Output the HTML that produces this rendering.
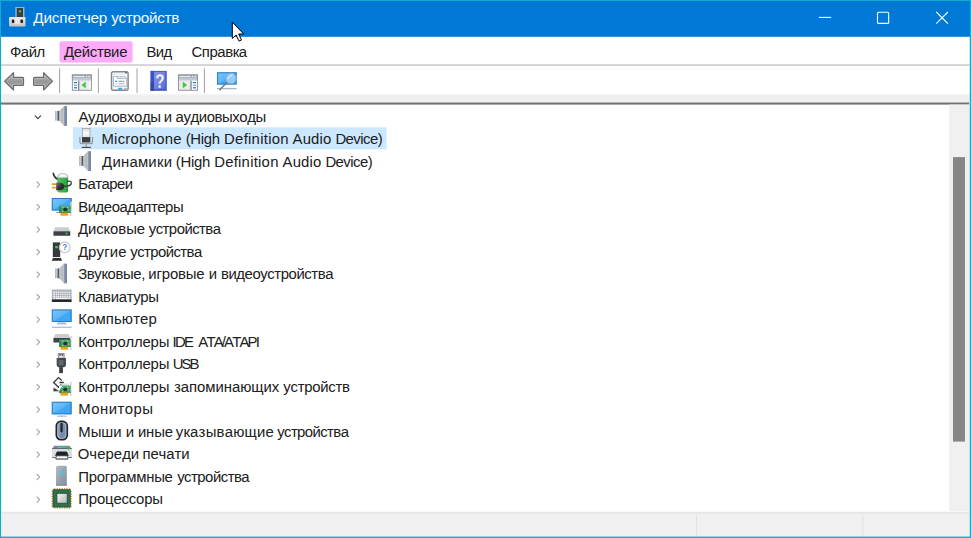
<!DOCTYPE html>
<html lang="ru"><head><meta charset="utf-8"><title>Диспетчер устройств</title>
<style>html,body{margin:0;padding:0;background:#fff;overflow:hidden}body{width:971px;height:538px;position:relative}svg{position:absolute;left:0;top:0;display:block}text{font-family:"Liberation Sans", sans-serif;white-space:pre;font-kerning:none}</style></head><body>
<svg width="971" height="538" viewBox="0 0 971 538">
<defs>
<linearGradient id="gArrow" x1="0" y1="0" x2="0" y2="1"><stop offset="0" stop-color="#bcbcbc"/><stop offset="0.55" stop-color="#969696"/><stop offset="1" stop-color="#acacac"/></linearGradient>
<linearGradient id="gCone" x1="0" y1="0" x2="1" y2="0"><stop offset="0" stop-color="#9a9fa4"/><stop offset="0.3" stop-color="#c6c8ca"/><stop offset="1" stop-color="#a9acb0"/></linearGradient>
<linearGradient id="gRim" x1="0" y1="0" x2="1" y2="0"><stop offset="0" stop-color="#b9c0c8"/><stop offset="0.35" stop-color="#8695a6"/><stop offset="1" stop-color="#66788c"/></linearGradient>
<linearGradient id="gMag" x1="0" y1="0" x2="1" y2="0"><stop offset="0" stop-color="#93a3b4"/><stop offset="0.4" stop-color="#ccd3da"/><stop offset="0.7" stop-color="#6c747c"/><stop offset="1" stop-color="#3f454b"/></linearGradient>
<linearGradient id="gScreen" x1="0" y1="0" x2="1" y2="1"><stop offset="0" stop-color="#7cc7fc"/><stop offset="0.5" stop-color="#5ab5f8"/><stop offset="0.52" stop-color="#44a8f3"/><stop offset="1" stop-color="#3fa4f2"/></linearGradient>
<linearGradient id="gTower" x1="0" y1="0" x2="1" y2="1"><stop offset="0" stop-color="#b4bcc8"/><stop offset="0.5" stop-color="#98a2b0"/><stop offset="1" stop-color="#848e9c"/></linearGradient>
<linearGradient id="gMouse" x1="0" y1="0" x2="1" y2="0"><stop offset="0" stop-color="#9fb2cb"/><stop offset="0.5" stop-color="#6f87a8"/><stop offset="1" stop-color="#8299b8"/></linearGradient>
<linearGradient id="gChip" x1="0" y1="0" x2="1" y2="1"><stop offset="0" stop-color="#f2f2f2"/><stop offset="1" stop-color="#b5b8ba"/></linearGradient>
<linearGradient id="gBase" x1="0" y1="0" x2="0" y2="1"><stop offset="0" stop-color="#ececec"/><stop offset="0.5" stop-color="#d6d6d6"/><stop offset="1" stop-color="#c6c2be"/></linearGradient>
<linearGradient id="gPlug" x1="0" y1="0" x2="1" y2="1"><stop offset="0" stop-color="#7a7a7a"/><stop offset="0.45" stop-color="#3a3a3a"/><stop offset="1" stop-color="#1c1c1c"/></linearGradient>
<linearGradient id="gBatt" x1="0" y1="0" x2="1" y2="0"><stop offset="0" stop-color="#4cc455"/><stop offset="0.55" stop-color="#36b648"/><stop offset="1" stop-color="#23963a"/></linearGradient>
<linearGradient id="gHelp" x1="0" y1="0" x2="1" y2="1"><stop offset="0" stop-color="#8890e3"/><stop offset="0.55" stop-color="#7482dd"/><stop offset="1" stop-color="#4a6cd6"/></linearGradient>
<linearGradient id="gUsb" x1="0" y1="0" x2="1" y2="0"><stop offset="0" stop-color="#55595d"/><stop offset="0.5" stop-color="#3a3d40"/><stop offset="1" stop-color="#4c5054"/></linearGradient>
<linearGradient id="gMic" x1="0" y1="0" x2="0" y2="1"><stop offset="0" stop-color="#d8d8d8"/><stop offset="0.5" stop-color="#fafafa"/><stop offset="1" stop-color="#e4e4e4"/></linearGradient>
<g id="speaker">
  <rect x="0" y="4.8" width="3.9" height="9.8" fill="url(#gMag)"/>
  <path d="M3.9 4.8 L8.4 0.5 L8.4 19.2 L3.9 14.6 Z" fill="url(#gCone)"/>
  <rect x="8.3" y="0" width="3.4" height="19.8" fill="url(#gRim)"/>
</g>
<g id="chev"><path d="M0.5 0.5 L3.4 3.5 L0.5 6.5" fill="none" stroke="#a3a3a3" stroke-width="1.1"/></g>
<g id="pcb">
  <rect x="10.9" y="-4" width="1.4" height="14" fill="#c9ced3"/>
  <rect x="11.8" y="-4" width="0.5" height="14" fill="#eceef0"/>
  <rect x="0" y="0" width="11.4" height="7" fill="#3f9f5e"/>
  <rect x="0" y="0" width="1.5" height="7" fill="#2d8149"/>
  <rect x="0" y="0" width="11.4" height="0.9" fill="#5db578"/>
  <rect x="0" y="6.2" width="11.4" height="0.8" fill="#2f7d49"/>
  <rect x="4.1" y="2.2" width="3.9" height="3" rx="1.3" fill="#2a2f2c"/>
  <rect x="3.1" y="1.3" width="0.9" height="0.9" fill="#dfe9e2"/><rect x="8" y="1.3" width="0.9" height="0.9" fill="#dfe9e2"/>
  <rect x="3.1" y="5.2" width="0.9" height="0.9" fill="#dfe9e2"/><rect x="9" y="3.8" width="0.9" height="0.9" fill="#dfe9e2"/>
  <rect x="1.2" y="7" width="7.7" height="2.9" fill="#eea316"/>
</g>
<g id="monitor">
  <rect x="0" y="0" width="19.8" height="12.5" fill="url(#gScreen)"/>
  <rect x="0.5" y="0.5" width="18.8" height="11.5" fill="none" stroke="#2c7fc6" stroke-width="1.05"/>
</g>
<g id="hdd">
  <path d="M2 0 L14.9 0 L16.9 3.9 L0 3.9 Z" fill="#c9cdd1"/>
  <rect x="0" y="3.9" width="16.9" height="4.6" rx="0.6" fill="#3e4246"/>
  <rect x="12.2" y="5.4" width="1.8" height="1.5" fill="#37d64b"/>
</g>
</defs>
<rect x="0" y="0" width="971" height="538" fill="#ffffff"/>
<rect x="0" y="0" width="971" height="36.8" fill="#0078d6"/>
<g><rect x="15.4" y="7" width="9" height="10.2" fill="#b9cbdc" opacity="0.85"/><rect x="16.7" y="7.9" width="6.4" height="9.3" fill="#3b3e40"/><rect x="18.8" y="10.3" width="2.2" height="2" fill="#34d53c"/><rect x="9.1" y="17" width="16.4" height="9.6" rx="0.8" fill="url(#gBase)"/><rect x="11.8" y="19.6" width="2.5" height="3.4" rx="0.8" fill="#1e1e1e"/><rect x="20.5" y="19.6" width="2.5" height="3.4" rx="0.8" fill="#1e1e1e"/><rect x="15" y="18.6" width="4.6" height="5.4" fill="#f4f4f4" opacity="0.6"/></g>
<g stroke="#ffffff" stroke-width="1.1" fill="none"><path d="M819 17.4 H831.2"/><rect x="877.5" y="12.2" width="11.2" height="11.2" rx="1"/><path d="M936.3 12 L947.9 23.6 M947.9 12 L936.3 23.6"/></g>
<rect x="59.5" y="41.3" width="73.1" height="21.2" rx="1.6" fill="#ffa9fb"/>
<rect x="0" y="64.3" width="971" height="1.5" fill="#c9c9c9"/>
<rect x="0" y="94.2" width="971" height="8.4" fill="#f0f0f0"/>
<rect x="0" y="102.5" width="969.5" height="2.1" fill="#737373"/>
<rect x="0" y="102" width="969.5" height="0.6" fill="#b9b9b9"/>
<rect x="59.0" y="68.4" width="1.1" height="24.6" fill="#a9a9a9"/>
<rect x="97.9" y="68.4" width="1.1" height="24.6" fill="#a9a9a9"/>
<rect x="136.5" y="68.4" width="1.1" height="24.6" fill="#a9a9a9"/>
<rect x="203.9" y="68.4" width="1.1" height="24.6" fill="#a9a9a9"/>
<g><path d="M4.7 81.25 L13.5 72.6 L13.5 77.4 L22.6 77.4 Q23.5 77.4 23.5 78.3 L23.5 84.5 Q23.5 85.4 22.6 85.4 L13.5 85.4 L13.5 90 Z" fill="url(#gArrow)" stroke="#6c6c6c" stroke-width="1.2" stroke-linejoin="round"/><path d="M6.4 81.25 L12.4 75.3 L12.4 78.5 L22.3 78.5 L22.3 84.2 L12.4 84.2 L12.4 87.2 Z" fill="none" stroke="#bdbdbd" stroke-width="0.8" stroke-linejoin="round" opacity="0.8"/></g>
<g transform="translate(57.1,0) scale(-1,1)"><path d="M4.7 81.25 L13.5 72.6 L13.5 77.4 L22.6 77.4 Q23.5 77.4 23.5 78.3 L23.5 84.5 Q23.5 85.4 22.6 85.4 L13.5 85.4 L13.5 90 Z" fill="url(#gArrow)" stroke="#6c6c6c" stroke-width="1.2" stroke-linejoin="round"/><path d="M6.4 81.25 L12.4 75.3 L12.4 78.5 L22.3 78.5 L22.3 84.2 L12.4 84.2 L12.4 87.2 Z" fill="none" stroke="#bdbdbd" stroke-width="0.8" stroke-linejoin="round" opacity="0.8"/></g>
<g transform="translate(71.9,74.5)"><rect x="0" y="0" width="19.9" height="16.2" fill="#f4f4f4"/><rect x="0" y="0" width="19.9" height="3.4" fill="#a2aab5"/><rect x="0" y="3.4" width="19.9" height="2.8" fill="#c2c9d3"/><rect x="1.2" y="1.4" width="11.6" height="1" fill="#eef1f5"/><rect x="14.1" y="1.2" width="1.2" height="1.4" fill="#f2f4f7"/><rect x="16.3" y="1.2" width="2.3" height="1.4" fill="#dfe3e9"/><rect x="0.8" y="6.2" width="5.6" height="9.3" fill="#ffffff"/><rect x="7.4" y="6.2" width="10.2" height="9.3" fill="#ececec"/><rect x="17.6" y="6.2" width="1.6" height="9.3" fill="#ffffff"/><rect x="6.2" y="6.2" width="1.2" height="9.4" fill="#737d8c"/><rect x="1.9" y="7.5" width="3.2" height="1.2" fill="#2f6fc4"/><rect x="1.9" y="10.1" width="3.2" height="1.2" fill="#6fa0dc"/><rect x="1.9" y="12.7" width="3.2" height="1.2" fill="#2f6fc4"/><path d="M9.8 10.6 L13.7 7.6 L13.7 13.6 Z" fill="#43c643" stroke="#43c643" stroke-width="0.4" stroke-linejoin="round"/><rect x="0.45" y="0.45" width="19" height="15.3" fill="none" stroke="#8c9198" stroke-width="0.95"/></g>
<g transform="translate(178.0,74.5)"><rect x="0" y="0" width="19.9" height="16.2" fill="#f4f4f4"/><rect x="0" y="0" width="19.9" height="3.4" fill="#a2aab5"/><rect x="0" y="3.4" width="19.9" height="2.8" fill="#c2c9d3"/><rect x="1.2" y="1.4" width="11.6" height="1" fill="#eef1f5"/><rect x="14.1" y="1.2" width="1.2" height="1.4" fill="#f2f4f7"/><rect x="16.3" y="1.2" width="2.3" height="1.4" fill="#dfe3e9"/><rect x="13.6" y="6.2" width="5.6" height="9.3" fill="#ffffff"/><rect x="0.8" y="6.2" width="11.6" height="9.3" fill="#ececec"/><rect x="12.4" y="6.2" width="1.2" height="9.4" fill="#737d8c"/><rect x="14.9" y="7.5" width="3.2" height="1.2" fill="#2f6fc4"/><rect x="14.9" y="10.1" width="3.2" height="1.2" fill="#6fa0dc"/><rect x="14.9" y="12.7" width="3.2" height="1.2" fill="#2f6fc4"/><path d="M8.9 10.5 L5 7.4 L5 13.6 Z" fill="#43c643" stroke="#43c643" stroke-width="0.4" stroke-linejoin="round"/><rect x="0.45" y="0.45" width="19" height="15.3" fill="none" stroke="#8c9198" stroke-width="0.95"/></g>
<g transform="translate(110.8,71)"><rect x="0.7" y="0.7" width="16.6" height="18.5" rx="1.8" fill="#f8f9fb" stroke="#81868f" stroke-width="1.45"/><rect x="1.5" y="2.6" width="15" height="0.7" fill="#d3d7de"/><rect x="14.2" y="0.9" width="1.9" height="1.5" fill="#64708a"/><path d="M2.6 5.3 L6.4 5.3 L6.4 7.2 L16 7.2 L16 15.2 L2.6 15.2 Z" fill="#fbfcfe" stroke="#97a4ba" stroke-width="0.85"/><rect x="6.4" y="5.3" width="7.8" height="1.9" fill="#eef1f6" stroke="#a5b0c3" stroke-width="0.6"/><rect x="10" y="5.3" width="0.6" height="1.9" fill="#a5b0c3"/><rect x="4.3" y="9.7" width="2" height="1.3" fill="#3d9bf0"/><rect x="7.6" y="9.8" width="6.2" height="1.1" fill="#9a9fa8"/><rect x="4.6" y="12.2" width="1.5" height="1.1" fill="#c3c7ce"/><rect x="7.6" y="12.2" width="6.2" height="1.1" fill="#b3b8c0"/><rect x="7.3" y="16.8" width="4" height="1.9" fill="#33a7f2"/><rect x="12.8" y="16.9" width="3.6" height="1.7" fill="#b5b8bd"/></g>
<g transform="translate(150.6,70.9)"><rect x="0" y="0" width="16.2" height="19.7" fill="#4464cf"/><rect x="0" y="0" width="3.2" height="19.7" fill="#3655c6"/><rect x="0" y="11.4" width="3.2" height="8.3" fill="#384a98"/><rect x="3.5" y="1.1" width="11" height="17.3" fill="url(#gHelp)"/><rect x="0" y="18.5" width="16.2" height="1.2" fill="#33459a" opacity="0.7"/><text transform="translate(9.3,16.6) scale(0.72,1)" x="0" y="0" font-size="21" font-weight="bold" text-anchor="middle" fill="#f4f6fb" stroke="#93a0c2" stroke-width="0.3">?</text></g>
<g><rect x="217" y="72.3" width="19.6" height="12.2" fill="url(#gScreen)"/><rect x="217.5" y="72.8" width="18.6" height="11.2" fill="none" stroke="#2c7fc6" stroke-width="1.05"/><rect x="217" y="87.9" width="19.6" height="1.4" fill="#a9b9c9"/><path d="M219.8 89.7 L226.6 82.8" stroke="#707984" stroke-width="1.5" stroke-linecap="round"/><circle cx="231" cy="78.4" r="5.3" fill="#8ecdfd" stroke="#93a5b7" stroke-width="1"/><path d="M227.6 78.6 L232.2 74.4" stroke="#c9eaff" stroke-width="1.3" fill="none" stroke-linecap="round"/></g>
<rect x="72.9" y="127.3" width="313.6" height="22.1" fill="#cce8ff"/>
<rect x="949.2" y="104.6" width="20.6" height="406.5" fill="#f0f0f0"/>
<rect x="953" y="157.1" width="12" height="284.5" fill="#868686"/>
<rect x="0" y="511.1" width="971" height="27" fill="#f0f0f0"/>
<rect x="0" y="511.1" width="971" height="1.2" fill="#f9f9f9"/>
<rect x="0" y="512.4" width="971" height="1" fill="#dedede"/>
<rect x="696" y="515.5" width="1" height="21" fill="#e1e1e1"/>
<rect x="862.3" y="515.5" width="1" height="21" fill="#e1e1e1"/>
<path d="M34.9 115.6 L37.9 118.6 L40.9 115.6" fill="none" stroke="#404040" stroke-width="1.15"/>
<use href="#chev" x="36.2" y="181.10"/>
<use href="#chev" x="36.2" y="203.60"/>
<use href="#chev" x="36.2" y="226.10"/>
<use href="#chev" x="36.2" y="248.60"/>
<use href="#chev" x="36.2" y="271.10"/>
<use href="#chev" x="36.2" y="293.60"/>
<use href="#chev" x="36.2" y="316.10"/>
<use href="#chev" x="36.2" y="338.60"/>
<use href="#chev" x="36.2" y="361.10"/>
<use href="#chev" x="36.2" y="383.60"/>
<use href="#chev" x="36.2" y="406.10"/>
<use href="#chev" x="36.2" y="428.60"/>
<use href="#chev" x="36.2" y="451.10"/>
<use href="#chev" x="36.2" y="473.60"/>
<use href="#chev" x="36.2" y="496.10"/>
<use href="#speaker" x="55.2" y="106.10"/>
<g transform="translate(79.3,128.40)"><rect x="3" y="0" width="7.7" height="9" fill="url(#gMic)" stroke="#9c9c9c" stroke-width="0.7"/><rect x="2.7" y="8.7" width="8.3" height="5.4" fill="#3d3d3d"/><path d="M0.6 8.6 L0.6 13.4 Q0.6 15.4 2.6 15.4 L11.2 15.4 Q13.2 15.4 13.2 13.4 L13.2 8.6" fill="none" stroke="#8f8f8f" stroke-width="1.1"/><rect x="6.4" y="15.4" width="1.1" height="3.4" fill="#8f8f8f"/><rect x="2.4" y="18.4" width="9.2" height="1.2" fill="#4a4a4a"/></g>
<use href="#speaker" x="79.2" y="151.20"/>
<g transform="translate(51.4,173.20)"><path d="M1.9 0.2 Q2.5 3.9 6.2 6.2" fill="none" stroke="#333333" stroke-width="1.6" stroke-linecap="round"/><rect x="6" y="1.4" width="10.7" height="17.9" rx="2.6" fill="url(#gBatt)"/><path d="M6.2 4.6 Q6.2 0.3 11.35 0.3 Q16.5 0.3 16.5 4.6 Z" fill="#eef2f5" stroke="#9ba9b4" stroke-width="0.7"/><path d="M8.6 2.9 Q11.3 1.3 14.2 2.9" fill="none" stroke="#ffffff" stroke-width="1.1"/><path d="M16.2 8.2 Q20.6 7.4 19.8 10.6 Q18.9 13.6 12.4 12.6" fill="none" stroke="#383838" stroke-width="1.25" stroke-linecap="round"/><rect x="0.5" y="10.1" width="4.6" height="1.7" fill="#e2952a"/><rect x="0.5" y="13.5" width="4.6" height="1.7" fill="#e2952a"/><rect x="0.9" y="11.8" width="3.8" height="1.7" fill="#f4f4f4"/><path d="M4.8 9.2 L8.8 9.2 Q12.9 9.7 12.9 13.1 Q12.9 16.6 8.8 17.1 L4.8 17.1 Z" fill="url(#gPlug)"/></g>
<g transform="translate(51.8,198.00)"><use href="#monitor"/><rect x="4.6" y="14.1" width="3" height="0.9" fill="#6f88b3"/><use href="#pcb" x="7.5" y="7.8"/></g>
<use href="#hdd" x="53.4" y="227.30"/>
<g transform="translate(51.4,242.40)"><rect x="1.4" y="0" width="7.4" height="14.7" fill="#36393c"/><path d="M0.4 18.3 L1.6 15.5 L9.4 15.5 L10.7 18.3 Z" fill="#2b2d30"/><rect x="3.8" y="3.5" width="2.5" height="2.4" fill="#3fd447"/><circle cx="13.3" cy="5" r="5.3" fill="#ffffff" stroke="#c2c6ca" stroke-width="1.25"/><text x="13.4" y="7.9" font-size="8.2" font-weight="bold" text-anchor="middle" fill="#3888d8">?</text></g>
<use href="#speaker" x="55.2" y="263.60"/>
<g transform="translate(51.8,289.50)"><rect x="0" y="0" width="19.8" height="10.2" fill="#adb4bf"/><rect x="0" y="9.9" width="19.8" height="2.6" fill="#26282b"/><rect x="1.5" y="2.2" width="16.8" height="1.5" fill="#f4f5f7"/><rect x="1.5" y="4.3" width="16.8" height="1.5" fill="#f4f5f7"/><rect x="1.5" y="6.5" width="16.8" height="1.5" fill="#f4f5f7"/><rect x="3.4" y="2.1" width="0.55" height="6" fill="#8f97a3"/><rect x="5.3" y="2.1" width="0.55" height="6" fill="#8f97a3"/><rect x="7.2" y="2.1" width="0.55" height="6" fill="#8f97a3"/><rect x="9.1" y="2.1" width="0.55" height="6" fill="#8f97a3"/><rect x="11.0" y="2.1" width="0.55" height="6" fill="#8f97a3"/><rect x="12.9" y="2.1" width="0.55" height="6" fill="#8f97a3"/><rect x="14.8" y="2.1" width="0.55" height="6" fill="#8f97a3"/><rect x="16.7" y="2.1" width="0.55" height="6" fill="#8f97a3"/><rect x="1.5" y="8.5" width="2" height="1" fill="#f4f5f7"/><rect x="16.3" y="8.5" width="2" height="1" fill="#f4f5f7"/><rect x="4.2" y="8.5" width="11.4" height="1" fill="#fbfbfc"/></g>
<g transform="translate(51.8,309.50)"><use href="#monitor"/><path d="M6.6 12.5 L13.2 12.5 L14.8 14.6 L5 14.6 Z" fill="#c3d0de"/><rect x="5" y="14.1" width="9.8" height="0.8" fill="#94abc4"/><rect x="0" y="17.2" width="19.8" height="1" fill="#8fa8c2"/></g>
<g transform="translate(51.8,334.10)"><use href="#hdd" x="1.6" y="0"/><use href="#pcb" x="7.5" y="5.7"/></g>
<g transform="translate(56.6,353.60)"><rect x="1.7" y="0" width="5.8" height="4.6" fill="#e6e8ea" stroke="#74787c" stroke-width="0.8"/><rect x="2.1" y="0.4" width="5" height="1.2" fill="#7c8084"/><rect x="2.7" y="1.2" width="1.2" height="1.3" fill="#5a5e62"/><rect x="5.3" y="1.2" width="1.2" height="1.3" fill="#5a5e62"/><path d="M0 4.3 L9.4 4.3 L9.4 11.4 Q9.4 13.5 7.3 13.6 L2.1 13.6 Q0 13.5 0 11.4 Z" fill="url(#gUsb)"/><rect x="2.5" y="6.2" width="4.4" height="5.6" rx="0.8" fill="#72767a" opacity="0.75"/><rect x="2.6" y="13.5" width="3.7" height="6" fill="#3a3d41"/></g>
<g transform="translate(51.8,377.00)"><path d="M10 3.4 L6.7 0.6 L1.8 5.5 L6.7 10.3 L9.6 7.4" fill="none" stroke="#383b3e" stroke-width="1.3" stroke-linejoin="miter"/><path d="M7.7 5.5 L12 5.5" fill="none" stroke="#2e3134" stroke-width="1.5"/><path d="M10.4 6.4 L17 6.4 L17 8.8 L9 8.8 Z" fill="#cdd6de" opacity="0.8"/><use href="#pcb" x="7.4" y="8.7"/><path d="M7.2 8.5 L10.6 8.5 L7.2 14.4 Z" fill="#ffffff"/><path d="M1.7 10.6 L7.6 14.3 L1.7 14.4 Z" fill="#3d4043"/><rect x="1.2" y="14.3" width="6.2" height="0.8" fill="#c9ced3"/></g>
<g transform="translate(51.8,401.80)"><use href="#monitor"/><rect x="8.8" y="12.5" width="2.2" height="1.6" fill="#cfd9e4"/><rect x="5" y="13.9" width="9.8" height="0.9" fill="#8fa8c2"/></g>
<g transform="translate(55.5,420.60)"><rect x="0.85" y="0.85" width="10.9" height="18.3" rx="4.4" fill="url(#gMouse)" stroke="#1f2328" stroke-width="1.7"/><rect x="2.2" y="2.2" width="8.2" height="15.6" rx="3.2" fill="none" stroke="#c5cfdc" stroke-width="0.7" opacity="0.75"/><rect x="4.9" y="2.2" width="2.2" height="9.4" rx="1" fill="#22262c"/></g>
<g transform="translate(51.8,445.50)"><path d="M2.4 0.3 L17.7 0.3 L20.1 3.6 L0.2 3.6 Z" fill="#7f8790"/><rect x="0.2" y="2.9" width="19.9" height="0.8" fill="#4d555d"/><rect x="6.2" y="1.3" width="3.6" height="1.2" fill="#35d3e0"/><rect x="9.8" y="1.3" width="4.3" height="1.2" fill="#3fd06a"/><rect x="0.2" y="3.6" width="19.9" height="8.7" fill="#d9dde1"/><rect x="16" y="2.2" width="1.6" height="2.3" fill="#35d345"/><rect x="0.2" y="11.6" width="19.9" height="0.8" fill="#5c6066"/><path d="M5.3 6.4 L14.9 6.4 L16.4 10.2 L3.8 10.2 Z" fill="#1f2326" stroke="#1f2326" stroke-width="0.8" stroke-linejoin="round"/><path d="M4.8 10.4 L15.4 10.4 L16.3 13.5 L3.9 13.5 Z" fill="#ffffff" stroke="#555a60" stroke-width="0.8" stroke-linejoin="round"/><rect x="4.2" y="13.1" width="11.8" height="0.8" fill="#4c5056"/></g>
<g transform="translate(56,465.80)"><path d="M0 1.6 Q0 0 1.6 0 L9.2 0 Q10.8 0 10.8 1.6 L10.8 19.8 L0 19.8 Z" fill="url(#gTower)"/><rect x="0" y="18.8" width="10.8" height="1" fill="#7b8491"/><rect x="4.4" y="6.1" width="2.6" height="2.7" fill="#2fd0ea"/></g>
<g transform="translate(52.1,488.40)"><rect x="2.10" y="-0.4" width="1.2" height="1.7" fill="#dd9a3a"/><rect x="2.10" y="18.9" width="1.2" height="1.4" fill="#dd9a3a"/><rect x="-0.7" y="2.60" width="1.7" height="1.2" fill="#dd9a3a"/><rect x="18.4" y="2.60" width="1.4" height="1.2" fill="#dd9a3a"/><rect x="4.55" y="-0.4" width="1.2" height="1.7" fill="#dd9a3a"/><rect x="4.55" y="18.9" width="1.2" height="1.4" fill="#dd9a3a"/><rect x="-0.7" y="5.05" width="1.7" height="1.2" fill="#dd9a3a"/><rect x="18.4" y="5.05" width="1.4" height="1.2" fill="#dd9a3a"/><rect x="7.00" y="-0.4" width="1.2" height="1.7" fill="#dd9a3a"/><rect x="7.00" y="18.9" width="1.2" height="1.4" fill="#dd9a3a"/><rect x="-0.7" y="7.50" width="1.7" height="1.2" fill="#dd9a3a"/><rect x="18.4" y="7.50" width="1.4" height="1.2" fill="#dd9a3a"/><rect x="9.45" y="-0.4" width="1.2" height="1.7" fill="#dd9a3a"/><rect x="9.45" y="18.9" width="1.2" height="1.4" fill="#dd9a3a"/><rect x="-0.7" y="9.95" width="1.7" height="1.2" fill="#dd9a3a"/><rect x="18.4" y="9.95" width="1.4" height="1.2" fill="#dd9a3a"/><rect x="11.90" y="-0.4" width="1.2" height="1.7" fill="#dd9a3a"/><rect x="11.90" y="18.9" width="1.2" height="1.4" fill="#dd9a3a"/><rect x="-0.7" y="12.40" width="1.7" height="1.2" fill="#dd9a3a"/><rect x="18.4" y="12.40" width="1.4" height="1.2" fill="#dd9a3a"/><rect x="14.35" y="-0.4" width="1.2" height="1.7" fill="#dd9a3a"/><rect x="14.35" y="18.9" width="1.2" height="1.4" fill="#dd9a3a"/><rect x="-0.7" y="14.85" width="1.7" height="1.2" fill="#dd9a3a"/><rect x="18.4" y="14.85" width="1.4" height="1.2" fill="#dd9a3a"/><rect x="16.80" y="-0.4" width="1.2" height="1.7" fill="#dd9a3a"/><rect x="16.80" y="18.9" width="1.2" height="1.4" fill="#dd9a3a"/><rect x="-0.7" y="17.30" width="1.7" height="1.2" fill="#dd9a3a"/><rect x="18.4" y="17.30" width="1.4" height="1.2" fill="#dd9a3a"/><rect x="0.9" y="1.3" width="17.3" height="17.4" fill="#316e4a" stroke="#255439" stroke-width="0.8"/><rect x="4.8" y="4.9" width="10.3" height="9.9" fill="url(#gChip)" stroke="#204a33" stroke-width="0.8"/></g>
<text id="title" y="22.80" font-size="15.30" fill="#f4f8fd"><tspan x="33.19" letter-spacing="-0.149">Диспетчер</tspan> <tspan x="111.16" letter-spacing="-0.307">устройств</tspan></text>
<text id="m0" y="57.00" font-size="14.90" fill="#202020"><tspan x="10.04" letter-spacing="-0.480">Файл</tspan></text>
<text id="m1" y="57.00" font-size="14.90" fill="#202020"><tspan x="63.99" letter-spacing="-0.290">Действие</tspan></text>
<text id="m2" y="57.00" font-size="14.90" fill="#202020"><tspan x="146.58" letter-spacing="-0.639">Вид</tspan></text>
<text id="m3" y="57.00" font-size="14.90" fill="#202020"><tspan x="191.54" letter-spacing="-0.428">Справка</tspan></text>
<text id="r0" y="121.90" font-size="14.90" fill="#202020"><tspan x="78.47" letter-spacing="-0.354">Аудиовходы</tspan> <tspan x="163.69">и</tspan> <tspan x="175.57" letter-spacing="-0.414">аудиовыходы</tspan></text>
<text id="r1" y="144.40" font-size="14.90" fill="#202020"><tspan x="101.38" letter-spacing="0.270">Microphone</tspan> <tspan x="185.68" letter-spacing="-0.279">(High</tspan> <tspan x="224.08" letter-spacing="0.264">Definition</tspan> <tspan x="292.57" letter-spacing="0.162">Audio</tspan> <tspan x="335.38" letter-spacing="-0.527">Device)</tspan></text>
<text id="r2" y="166.90" font-size="14.90" fill="#202020"><tspan x="102.09" letter-spacing="0.229">Динамики</tspan> <tspan x="175.78" letter-spacing="-0.279">(High</tspan> <tspan x="214.18" letter-spacing="0.241">Definition</tspan> <tspan x="282.57" letter-spacing="0.162">Audio</tspan> <tspan x="325.38" letter-spacing="-0.527">Device)</tspan></text>
<text id="r3" y="189.40" font-size="14.90" fill="#202020"><tspan x="78.28" letter-spacing="-0.536">Батареи</tspan></text>
<text id="r4" y="211.90" font-size="14.90" fill="#202020"><tspan x="78.28" letter-spacing="-0.460">Видеоадаптеры</tspan></text>
<text id="r5" y="234.40" font-size="14.90" fill="#202020"><tspan x="77.89" letter-spacing="-0.044">Дисковые</tspan> <tspan x="148.76" letter-spacing="-0.529">устройства</tspan></text>
<text id="r6" y="256.90" font-size="14.90" fill="#202020"><tspan x="77.89" letter-spacing="0.160">Другие</tspan> <tspan x="130.26" letter-spacing="-0.562">устройства</tspan></text>
<text id="r7" y="279.40" font-size="14.90" fill="#202020"><tspan x="78.21" letter-spacing="-0.387">Звуковые,</tspan> <tspan x="148.37" letter-spacing="-0.158">игровые</tspan> <tspan x="208.64">и</tspan> <tspan x="220.97" letter-spacing="-0.434">видеоустройства</tspan></text>
<text id="r8" y="301.90" font-size="14.90" fill="#202020"><tspan x="78.28" letter-spacing="-0.289">Клавиатуры</tspan></text>
<text id="r9" y="324.40" font-size="14.90" fill="#202020"><tspan x="78.28" letter-spacing="0.117">Компьютер</tspan></text>
<text id="r10" y="346.90" font-size="14.90" fill="#202020"><tspan x="78.28" letter-spacing="-0.211">Контроллеры</tspan> <tspan x="172.42" letter-spacing="-1.611">IDE</tspan> <tspan x="198.27" letter-spacing="-1.821">ATA/ATAPI</tspan></text>
<text id="r11" y="369.40" font-size="14.90" fill="#202020"><tspan x="78.28" letter-spacing="-0.211">Контроллеры</tspan> <tspan x="172.65" letter-spacing="-1.951">USB</tspan></text>
<text id="r12" y="391.90" font-size="14.90" fill="#202020"><tspan x="78.28" letter-spacing="-0.211">Контроллеры</tspan> <tspan x="174.04" letter-spacing="-0.050">запоминающих</tspan> <tspan x="283.36" letter-spacing="-0.278">устройств</tspan></text>
<text id="r13" y="414.40" font-size="14.90" fill="#202020"><tspan x="78.28" letter-spacing="0.485">Мониторы</tspan></text>
<text id="r14" y="436.90" font-size="14.90" fill="#202020"><tspan x="78.28" letter-spacing="-0.014">Мыши</tspan> <tspan x="125.64">и</tspan> <tspan x="137.97" letter-spacing="-0.184">иные</tspan> <tspan x="175.76" letter-spacing="0.206">указывающие</tspan> <tspan x="277.16" letter-spacing="-0.585">устройства</tspan></text>
<text id="r15" y="459.40" font-size="14.90" fill="#202020"><tspan x="77.69" letter-spacing="0.052">Очереди</tspan> <tspan x="142.47" letter-spacing="-0.097">печати</tspan></text>
<text id="r16" y="481.90" font-size="14.90" fill="#202020"><tspan x="78.29" letter-spacing="-0.233">Программные</tspan> <tspan x="177.16" letter-spacing="-0.507">устройства</tspan></text>
<text id="r17" y="504.40" font-size="14.90" fill="#202020"><tspan x="78.29" letter-spacing="-0.161">Процессоры</tspan></text>
<path transform="translate(232.3,22.1)" d="M0 0 L0 16.4 L3.8 12.9 L6.7 19 L9.2 17.9 L6.4 11.9 L11.4 11.9 Z" fill="#ffffff" stroke="#000000" stroke-width="1" stroke-linejoin="miter"/>
<rect x="969.1" y="37" width="0.8" height="499.6" fill="#faeeea"/>
<rect x="0" y="0" width="971" height="1" fill="#14abc8"/>
<rect x="0" y="0" width="1.05" height="538" fill="#14abc8"/>
<rect x="969.8" y="0" width="1.2" height="538" fill="#14abc8"/>
<rect x="0" y="536.6" width="971" height="1.4" fill="#14abc8"/>
</svg></body></html>
